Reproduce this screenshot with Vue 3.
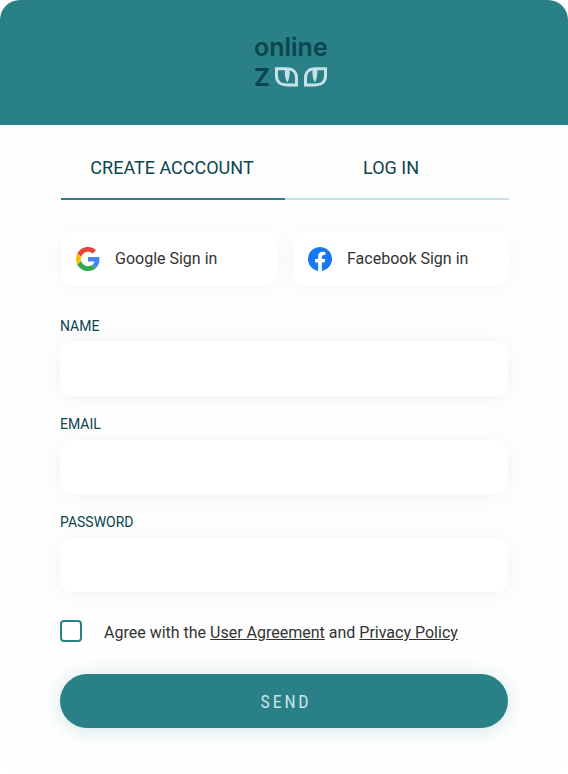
<script setup>
import { ref } from 'vue'

const tab = ref('create')
const tabs = [
  { id: 'create', label: 'CREATE ACCCOUNT' },
  { id: 'login', label: 'LOG IN' },
]
const fields = [
  { id: 'name', label: 'NAME', type: 'text' },
  { id: 'email', label: 'EMAIL', type: 'email' },
  { id: 'password', label: 'PASSWORD', type: 'password' },
]
const agreed = ref(false)
</script>

<template>
  <main class="card">
    <header class="header">
      <div class="logo">
        <span class="word">online</span>
        <div class="eyes">
          <span class="zed">Z</span>
          <svg class="eye" viewBox="0 0 23 20">
            <path class="rim" d="M1.5 1.8H12C18 1.8 21.5 5.4 21.5 10.5V17.9H11.5C5 17.9 1.5 14.5 1.5 9Z" />
            <path class="pupil" d="M10 2H14.5C15 7 14.6 12 12.3 15.4C10 12 9.5 7 10 2Z" />
          </svg>
          <svg class="eye mirrored" viewBox="0 0 23 20">
            <path class="rim" d="M1.5 1.8H12C18 1.8 21.5 5.4 21.5 10.5V17.9H11.5C5 17.9 1.5 14.5 1.5 9Z" transform="translate(23 0) scale(-1 1)" />
            <path class="pupil" d="M8.6 2H13.1C13.6 7 13.1 12 10.9 15.4C8.5 12 8.1 7 8.6 2Z" />
          </svg>
        </div>
      </div>
    </header>

    <nav class="tabs">
      <button
        v-for="t in tabs"
        :key="t.id"
        type="button"
        class="tab"
        :class="{ active: tab === t.id }"
        @click="tab = t.id"
      >{{ t.label }}</button>
    </nav>

    <div class="socials">
      <button type="button" class="social">
        <svg class="icon" viewBox="0 0 48 48">
          <path fill="#EA4335" d="M24 9.5c3.54 0 6.71 1.22 9.21 3.6l6.85-6.85C35.9 2.38 30.47 0 24 0 14.62 0 6.51 5.38 2.56 13.22l7.98 6.19C12.43 13.72 17.74 9.5 24 9.5z" />
          <path fill="#4285F4" d="M46.98 24.55c0-1.57-.15-3.09-.38-4.55H24v9.02h12.94c-.58 2.96-2.26 5.48-4.78 7.18l7.73 6c4.51-4.18 7.09-10.36 7.09-17.65z" />
          <path fill="#FBBC05" d="M10.53 28.59c-.48-1.45-.76-2.99-.76-4.59s.27-3.14.76-4.59l-7.98-6.19C.92 16.46 0 20.12 0 24c0 3.88.92 7.54 2.56 10.78l7.97-6.19z" />
          <path fill="#34A853" d="M24 48c6.48 0 11.93-2.13 15.89-5.81l-7.73-6c-2.15 1.45-4.92 2.3-8.16 2.3-6.26 0-11.57-4.22-13.47-9.91l-7.98 6.19C6.51 42.62 14.62 48 24 48z" />
        </svg>
        <span>Google Sign in</span>
      </button>
      <button type="button" class="social">
        <svg class="icon" viewBox="0 0 24 24">
          <path fill="#1877F2" d="M24 12.073c0-6.627-5.373-12-12-12s-12 5.373-12 12c0 5.99 4.388 10.954 10.125 11.854v-8.385H7.078v-3.47h3.047V9.43c0-3.007 1.792-4.669 4.533-4.669 1.312 0 2.686.235 2.686.235v2.953H15.83c-1.491 0-1.956.925-1.956 1.874v2.25h3.328l-.532 3.47h-2.796v8.385C19.612 23.027 24 18.062 24 12.073z" />
        </svg>
        <span>Facebook Sign in</span>
      </button>
    </div>

    <form class="form" @submit.prevent>
      <div v-for="f in fields" :key="f.id" class="field">
        <label class="label" :for="f.id">{{ f.label }}</label>
        <input :id="f.id" class="input" :type="f.type">
      </div>

      <div class="agree">
        <input v-model="agreed" class="check" type="checkbox">
        <span>Agree with the <a class="link">User Agreement</a> and <a class="link">Privacy Policy</a></span>
      </div>

      <button type="submit" class="send">SEND</button>
    </form>
  </main>
</template>

<style>
body {
  background: #fff;
}
</style>

<style scoped>
.card {
  box-sizing: border-box;
  width: 568px;
  height: 774px;
  overflow: hidden;
  border-radius: 20px;
  background: #fefefe;
  font-family: Roboto, "Liberation Sans", sans-serif;
  color: #333;
}

button,
input {
  box-sizing: border-box;
  margin: 0;
  padding: 0;
  border: 0;
  font-family: inherit;
}

.header {
  box-sizing: border-box;
  height: 125px;
  padding: 32px 0 0 254px;
  background: #2a8087;
}

.logo {
  display: flex;
  flex-direction: column;
  color: #0b454d;
  font: 600 25px/30px Inter, sans-serif;
}

.eyes {
  display: flex;
  align-items: center;
  height: 30px;
}

.zed {
  width: 21px;
  padding-top: 1px;
  font-size: 24px;
  font-weight: 700;
}

.eye {
  width: 23px;
  height: 20px;
}

.mirrored {
  margin-left: 6px;
}

.rim {
  fill: none;
  stroke: #c5e3e7;
  stroke-width: 3;
}

.pupil {
  fill: #c5e3e7;
}

.tabs {
  display: grid;
  grid-template-columns: 1fr 1fr;
  width: 448px;
  height: 75px;
  margin-left: 61px;
}

.tab {
  padding-top: 12px;
  border-bottom: 2px solid #c5e3e7;
  background: none;
  color: #0b454d;
  font-size: 18px;
  line-height: 24px;
}

.tab.active {
  border-color: #2a8087;
}

.tab:first-child {
  padding-right: 2px;
}

.tab:last-child {
  padding-right: 12px;
}

.socials {
  display: flex;
  gap: 16px;
  margin: 32px 0 0 61px;
}

.social {
  display: flex;
  align-items: center;
  gap: 15px;
  width: 216px;
  height: 54px;
  padding-left: 15px;
  border-radius: 10px;
  background: #fff;
  box-shadow: 0 2px 24px rgba(0, 0, 0, 0.04);
  color: #333;
  font-size: 16px;
}

.social span {
  padding-bottom: 2px;
}

.icon {
  width: 24px;
  height: 24px;
}

.form {
  width: 448px;
  margin: 30px 0 0 60px;
}

.field {
  display: flex;
  flex-direction: column;
  height: 98px;
}

.label {
  height: 26px;
  color: #0b454d;
  font-size: 14px;
  line-height: 20px;
}

.input {
  height: 54px;
  padding: 0 16px;
  border-radius: 10px;
  background: #fff;
  box-shadow: 0 2px 24px rgba(0, 0, 0, 0.05);
  font-size: 16px;
  outline: none;
}

.agree {
  display: flex;
  gap: 22px;
  height: 24px;
  margin-top: 10px;
  font-size: 16px;
  line-height: 26px;
}

.check {
  width: 22px;
  height: 22px;
  border: 2px solid #2a8087;
  border-radius: 4px;
  background: #fff;
  appearance: none;
}

.check:checked {
  background: #2a8087;
}

.link {
  text-decoration: underline;
}

.send {
  width: 448px;
  height: 54px;
  margin-top: 30px;
  padding-left: 4px;
  border-radius: 27px;
  background: #2a8087;
  box-shadow: 0 2px 20px rgba(42, 128, 135, 0.2);
  color: #c5e3e7;
  font-family: "Roboto Condensed", Roboto, sans-serif;
  font-size: 18px;
  font-stretch: condensed;
  letter-spacing: 2.8px;
}
</style>
